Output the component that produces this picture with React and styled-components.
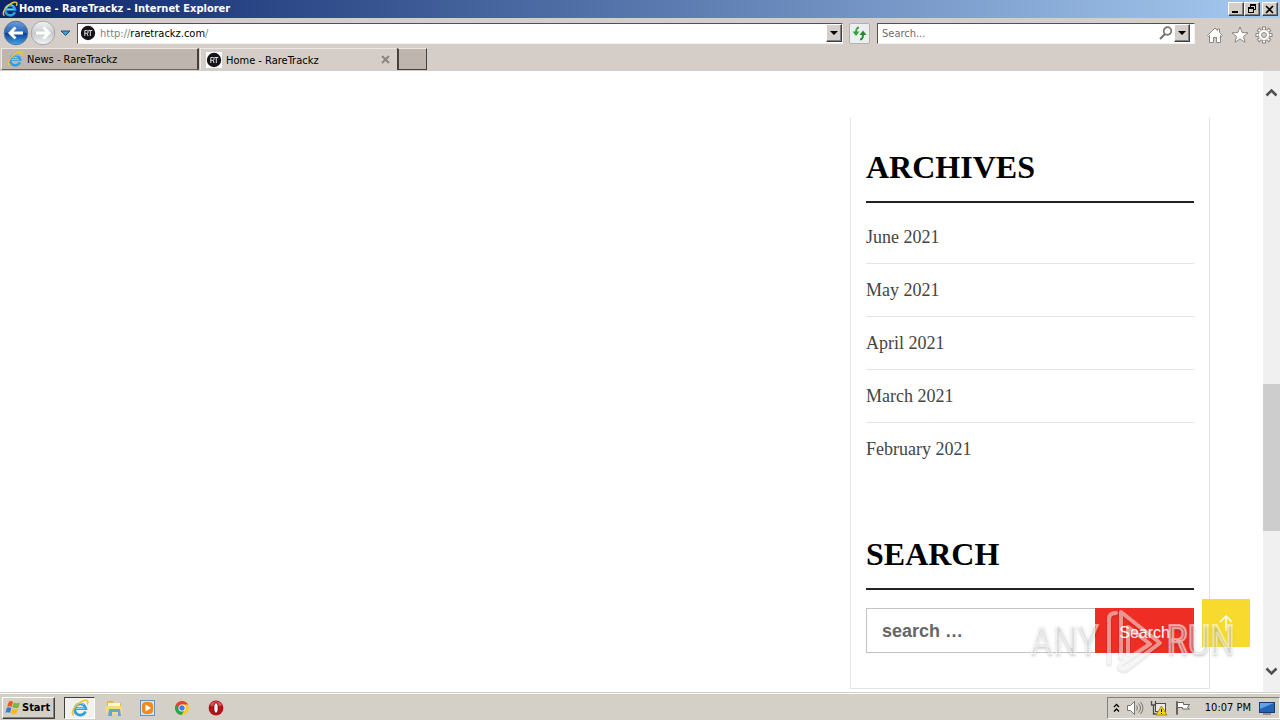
import React, { useState } from 'react'
import styled, { createGlobalStyle, css } from 'styled-components'

const GlobalStyle = createGlobalStyle`
  * {
    box-sizing: border-box;
  }
  body {
    margin: 0;
    background: #fff;
  }
  button, input {
    font: inherit;
    margin: 0;
    padding: 0;
    border: 0;
    border-radius: 0;
    outline: 0;
  }
  svg {
    display: block;
    flex: none;
  }
`

const raised = css`
  border: 1px solid;
  border-color: #fff #404040 #404040 #fff;
  box-shadow: inset -1px -1px 0 #808080;
`

const Screen = styled.div`
  display: flex;
  flex-direction: column;
  min-height: 100vh;
  font-family: 'DejaVu Sans Condensed', Tahoma, sans-serif;
  font-size: 11px;
  line-height: 14px;
  color: #000;
`

const TitleBar = styled.header`
  display: flex;
  align-items: center;
  height: 18px;
  padding: 0 2px;
  background: linear-gradient(to right, #0a246a, #a6caf0);
  color: #fff;
`

const WindowTitle = styled.h1`
  flex: 1;
  margin: 0 0 0 1px;
  font-size: 11px;
  line-height: 14px;
  font-weight: bold;
  white-space: nowrap;
`

const CaptionButton = styled.button`
  ${raised}
  display: flex;
  align-items: center;
  justify-content: center;
  width: 16px;
  height: 14px;
  margin-left: ${(p) => (p.$gap ? '2px' : '0')};
  background: #d4d0c8;
`

const NavBar = styled.div`
  display: flex;
  align-items: center;
  height: 30px;
  padding: 0 4px 0 2px;
  background: #d5cec8;
`

const IconButton = styled.button`
  display: flex;
  align-items: center;
  justify-content: center;
  width: ${(p) => p.$width || 24}px;
  height: 26px;
  background: transparent;
`

const Field = styled.div`
  display: flex;
  align-items: center;
  flex: ${(p) => (p.$width ? 'none' : '1')};
  width: ${(p) => (p.$width ? p.$width + 'px' : 'auto')};
  height: 21px;
  margin-left: ${(p) => (p.$width ? '7px' : '3px')};
  padding: 0 ${(p) => (p.$width ? '4px' : '0')} 0 2px;
  border: 1px solid;
  border-color: #565049 #f4f1ee #f4f1ee #565049;
  background: #fff;
`

const AddressText = styled.label`
  display: flex;
  flex: 1;
  margin-left: 4px;
  padding-top: 2px;
  color: #808080;
`

const AddressInput = styled.input`
  field-sizing: content;
  color: #000;
  background: transparent;
`

const SearchInput = styled.input`
  flex: 1;
  min-width: 0;
  padding: 2px 0 0 2px;
  background: transparent;
  &::placeholder {
    color: #6d6d6d;
    opacity: 1;
  }
`

const DropButton = styled.button`
  ${raised}
  display: flex;
  align-items: center;
  justify-content: center;
  width: 16px;
  height: 18px;
  background: #d4cfca;
`

const RefreshButton = styled.button`
  display: flex;
  align-items: center;
  justify-content: center;
  width: 21px;
  height: 21px;
  margin-left: 6px;
  border: 1px solid #b5b0aa;
  border-radius: 2px;
  background: #eceff0;
`

const Tools = styled.div`
  display: flex;
  margin-left: 8px;
  padding-top: 3px;
`

const TabRow = styled.nav`
  display: flex;
  gap: 1px;
  height: 23px;
  padding: 0 1px 1px;
  background: #d5cec8;
`

const Tab = styled.div`
  display: flex;
  align-items: center;
  width: ${(p) => (p.$active ? '196px' : '198px')};
  padding: 0 4px 0 5px;
  border: solid;
  border-width: ${(p) => (p.$active ? '1px 0 0 1px' : '1px 2px 1px 1px')};
  border-color: #ece8e4 #45403c #6b6561 #ece8e4;
  background: ${(p) => (p.$active ? '#d5cec8' : '#bdb5ae')};
`

const TabLabel = styled.button`
  flex: 1;
  margin-left: 4px;
  padding-top: 2px;
  background: transparent;
  color: #000;
  text-align: left;
`

const TabClose = styled.button`
  display: flex;
  padding: 2px;
  background: transparent;
`

const NewTab = styled.button`
  width: 30px;
  border: solid;
  border-width: 1px 1px 1px 2px;
  border-color: #ece8e4 #45403c #45403c #45403c;
  background: #bdb5ae;
`

const Viewport = styled.div`
  display: flex;
  flex: 1;
  background: #fff;
`

const Page = styled.main`
  position: relative;
  display: flex;
  justify-content: flex-end;
  align-items: flex-start;
  flex: 1;
  padding: 47px 53px 3px 20px;
`

const Sidebar = styled.aside`
  width: 360px;
  padding: 30px 15px 35px;
  border: 1px solid #e3e3e3;
  border-top: 0;
  font-family: 'Liberation Serif', 'Times New Roman', serif;
`

const Widget = styled.section`
  & + & {
    margin-top: 59px;
  }
`

const WidgetTitle = styled.h2`
  margin: 0;
  padding-bottom: 15px;
  border-bottom: 2px solid #222;
  font-size: 32px;
  line-height: 38px;
  font-weight: bold;
  text-transform: uppercase;
`

const ArchiveList = styled.ul`
  margin: 8px 0 0;
  padding: 0;
  list-style: none;
`

const ArchiveItem = styled.li`
  height: 53px;
  border-bottom: 1px solid #e4e4e4;
  font-size: 18px;
  line-height: 52px;
  &:last-child {
    border-bottom: 0;
  }
`

const ArchiveLink = styled.a`
  color: #444;
  text-decoration: none;
`

const SearchForm = styled.form`
  display: flex;
  height: 45px;
  margin-top: 18px;
  font-family: 'Liberation Sans', Arial, sans-serif;
`

const SiteSearchInput = styled.input`
  flex: 1;
  min-width: 0;
  padding: 2px 15px 0;
  border: 1px solid #c2c2c2;
  border-right: 0;
  font-size: 18px;
  font-weight: bold;
  &::placeholder {
    color: #666;
    opacity: 1;
  }
`

const SubmitButton = styled.button`
  padding: 4px 24px 0;
  background: #ee2d24;
  color: #fff;
  font-size: 16px;
`

const ScrollTop = styled.button`
  position: absolute;
  right: 13px;
  bottom: 45px;
  display: flex;
  align-items: center;
  justify-content: center;
  width: 48px;
  height: 48px;
  background: #f8da2e;
`

const Watermark = styled.div`
  position: absolute;
  right: 28px;
  bottom: 18px;
  display: flex;
  align-items: center;
  gap: 3px;
  pointer-events: none;
  font-family: 'Liberation Sans Narrow', 'Roboto Condensed', 'Liberation Sans', sans-serif;
  font-size: 40px;
  line-height: 48px;
  color: rgba(255, 255, 255, 0.3);
  -webkit-text-stroke: 2px rgba(255, 255, 255, 0.5);
  text-shadow: 0 2px 3px rgba(0, 0, 0, 0.26);
`

const ScrollBar = styled.div`
  display: flex;
  flex-direction: column;
  width: 17px;
  background: #f0f0f0;
`

const ScrollButton = styled.button`
  display: flex;
  align-items: center;
  justify-content: center;
  height: 42px;
  background: transparent;
`

const Track = styled.div`
  flex: ${(p) => p.$part};
  background: ${(p) => (p.$thumb ? '#cdcdcd' : 'transparent')};
`

const TaskBar = styled.footer`
  display: flex;
  align-items: center;
  height: 28px;
  padding: 2px 0 0 2px;
  border-top: 1px solid #d4d0c8;
  box-shadow: inset 0 1px 0 #fff;
  background: #d4d0c8;
`

const StartButton = styled.button`
  ${raised}
  display: flex;
  align-items: center;
  height: 22px;
  margin-right: 9px;
  padding: 0 4px 0 1px;
  background: #d4d0c8;
  font-weight: bold;
`

const TaskButton = styled.button`
  display: flex;
  align-items: center;
  justify-content: center;
  width: ${(p) => (p.$active ? '31px' : '34px')};
  height: 22px;
  margin-right: ${(p) => (p.$active ? '2px' : '0')};
  border: ${(p) => (p.$active ? '1px solid' : '0')};
  border-color: #404040 #fff #fff #404040;
  background: ${(p) => (p.$active ? '#f3f1ee' : 'transparent')};
`

const Tray = styled.div`
  display: flex;
  align-items: center;
  gap: 6px;
  height: 22px;
  margin-left: auto;
  padding: 0 4px 0 5px;
  border: 1px solid;
  border-color: #808080 #fff #fff #808080;
`

const Clock = styled.time`
  margin: 0 2px 0 8px;
  white-space: nowrap;
`

const IeLogo = ({ size = 16 }) => (
  <svg width={size} height={size} viewBox='0 0 16 16' fill='none'>
    <path
      d='M12.9 11.2A5 5 0 1 1 13.2 8.6H4.5'
      stroke='#2f9fe0'
      strokeWidth='2.5'
    />
    <path
      d='M4.5 8.4h7.5M4 6.5a4.6 4.6 0 0 1 7.4-1.5'
      stroke='#8bd3f7'
      strokeWidth='0.9'
    />
    <path
      d='M2.4 14.6C-.6 12.6 3 6.6 7.2 3.7 10.8 1 14.9.2 15 2.6c0 .8-.3 1.5-.7 2.2'
      stroke='#f2c533'
      strokeWidth='1.4'
    />
  </svg>
)

const SiteIcon = () => (
  <svg width='16' height='16' viewBox='0 0 16 16'>
    <rect width='16' height='16' fill='#fff' />
    <circle cx='8' cy='8' r='7.2' fill='#17131a' />
    <path
      d='M4.8 11V5.500h2a1.300 1.300 0 0 1 0 2.800h-2M7 8.300 8.100 11M8.300 5.500h4M10.300 5.500V11'
      stroke='#ddd'
      fill='none'
    />
  </svg>
)

const NavCircle = ({ forward }) => (
  <svg width='26' height='26' viewBox='0 0 26 26'>
    <defs>
      <linearGradient id='backFill' x1='0' y1='0' x2='0' y2='1'>
        <stop offset='0' stopColor='#6c9fdc' />
        <stop offset='0.48' stopColor='#2a62b4' />
        <stop offset='0.52' stopColor='#0d3f95' />
        <stop offset='1' stopColor='#3fa9ee' />
      </linearGradient>
      <linearGradient id='forwardFill' x1='0' y1='0' x2='0' y2='1'>
        <stop offset='0' stopColor='#f5f5f5' />
        <stop offset='0.5' stopColor='#c6c9ce' />
        <stop offset='1' stopColor='#f2f4f6' />
      </linearGradient>
    </defs>
    <circle
      cx='13'
      cy='13'
      r='11.8'
      fill={forward ? 'url(#forwardFill)' : 'url(#backFill)'}
      stroke={forward ? '#a3a6ab' : '#5b7396'}
    />
    <path
      d={forward ? 'M6 13h12M13.5 7.5 19 13l-5.5 5.5' : 'M20 13H8M12.5 7.5 7 13l5.5 5.5'}
      stroke='#fff'
      strokeWidth='2.8'
      fill='none'
    />
  </svg>
)

const Caret = () => (
  <svg width='9' height='6' viewBox='0 0 9 6'>
    <path d='M0 1h8L4 5z' />
  </svg>
)

const Chevron = ({ down }) => (
  <svg width='13' height='9' viewBox='0 0 13 9' fill='none'>
    <path
      d={down ? 'M1.5 1.5l5 5 5-5' : 'M1.5 7.5l5-5 5 5'}
      stroke='#505050'
      strokeWidth='2.6'
    />
  </svg>
)

const gearTeeth = [0, 45, 90, 135, 180, 225, 270, 315]

const GearIcon = () => (
  <svg width='18' height='18' viewBox='0 0 18 18'>
    {gearTeeth.map((a) => (
      <rect
        key={a}
        x='7.5'
        y='1'
        width='3'
        height='4'
        fill='#fff'
        stroke='#8b8681'
        transform={`rotate(${a} 9 9)`}
      />
    ))}
    <circle cx='9' cy='9' r='5.5' fill='#fff' stroke='#8b8681' strokeWidth='0.6' />
    <circle cx='9' cy='9' r='2.4' fill='#d5cec8' stroke='#8b8681' />
  </svg>
)

const WindowsFlag = () => (
  <svg width='18' height='18' viewBox='0 0 17 16'>
    <path d='M4.5 2C6 1.200 7.500 1.400 8.600 2.200L7.300 7C6 6.200 4.500 6.200 3 6.900z' fill='#ee5a24' />
    <path d='M9.300 2.600c1.600 1 3.500 1.100 5.700.1l-1.400 4.800c-2 .9-3.900.8-5.600-.2z' fill='#7ab932' />
    <path d='M2.700 7.700c1.500-.8 3-.6 4.300.2l-1.300 4.700c-1.400-.9-2.900-.9-4.400-.1z' fill='#2c80d3' />
    <path d='M7.700 8.400c1.700 1 3.500 1 5.600.1L12 13.100c-2 1-4 .9-5.600-.1z' fill='#f8bd16' />
  </svg>
)

const FolderIcon = () => (
  <svg width='18' height='18' viewBox='0 0 18 18'>
    <path d='M2 2h6l1 2h7v10H2z' fill='#dfb84a' />
    <path d='M3 4h12v4H3z' fill='#fff6cf' />
    <path d='M1 7h16v8H1z' fill='#f5dc80' />
    <path d='M4 10h11l1 7h-3v-4H7v4H3z' fill='#5aa9da' />
  </svg>
)

const PlayerIcon = () => (
  <svg width='18' height='18' viewBox='0 0 18 18'>
    <rect x='1.5' y='1.5' width='14' height='15' fill='#cfe6fa' stroke='#5a97d1' />
    <rect x='3' y='3' width='11' height='12' rx='4' fill='#f18a1b' />
    <path d='M6.5 5.500 12 9l-5.500 3.500z' fill='#fff' />
  </svg>
)

const ChromeIcon = () => (
  <svg width='16' height='16' viewBox='0 0 16 16'>
    <circle cx='8' cy='8' r='7' fill='#f7c92c' />
    <path d='M1.900 4.500A7 7 0 0 0 7.500 15L11 9.500 8 8z' fill='#2ba24c' />
    <path d='M8 4.500h6.100A7 7 0 0 0 1.900 4.500L5 9.500z' fill='#df4332' />
    <circle cx='8' cy='8' r='3.500' fill='#fff' />
    <circle cx='8' cy='8' r='2.700' fill='#3d7fe0' />
  </svg>
)

const OperaIcon = () => (
  <svg width='16' height='16' viewBox='0 0 16 16'>
    <circle cx='8' cy='8' r='7.4' fill='#b5121b' />
    <path d='M2 5a7 7 0 0 1 12 0c-3 2-9 2-12 0z' fill='#d9555a' />
    <ellipse cx='8' cy='8' rx='2.2' ry='5.2' fill='#fff' stroke='#7c0a10' />
  </svg>
)

const archives = [
  'June 2021',
  'May 2021',
  'April 2021',
  'March 2021',
  'February 2021'
]

const tasks = [
  { name: 'Windows Explorer', icon: <FolderIcon /> },
  { name: 'Media Player', icon: <PlayerIcon /> },
  { name: 'Chrome', icon: <ChromeIcon /> },
  { name: 'Opera', icon: <OperaIcon /> }
]

const BrowserChrome = () => {
  const [address, setAddress] = useState('raretrackz.com')
  const [query, setQuery] = useState('')

  return (
    <>
      <TitleBar>
        <IeLogo />
        <WindowTitle>Home - RareTrackz - Internet Explorer</WindowTitle>
        <CaptionButton type='button' aria-label='Minimize'>
          <svg width='10' height='9' viewBox='0 0 10 9'>
            <path d='M1 6h6v2H1z' />
          </svg>
        </CaptionButton>
        <CaptionButton type='button' aria-label='Restore'>
          <svg width='10' height='10' viewBox='0 0 10 10'>
            <path d='M3 0h6v6H7V5h1V2H4v1H3zM1 3h6v6H1zM2 5v3h4V5z' fillRule='evenodd' />
          </svg>
        </CaptionButton>
        <CaptionButton type='button' aria-label='Close' $gap>
          <svg width='10' height='9' viewBox='0 0 10 9'>
            <path d='M1 1l7 7M8 1 1 8' stroke='#000' strokeWidth='1.7' />
          </svg>
        </CaptionButton>
      </TitleBar>
      <NavBar>
        <IconButton type='button' aria-label='Back' $width={27}>
          <NavCircle />
        </IconButton>
        <IconButton type='button' aria-label='Forward' $width={28}>
          <NavCircle forward />
        </IconButton>
        <IconButton type='button' aria-label='Recent pages' $width={17}>
          <svg width='11' height='7' viewBox='0 0 11 7'>
            <path d='M1 1h9L5.500 5.500z' fill='#4b9ad0' stroke='#1d4f85' />
          </svg>
        </IconButton>
        <Field>
          <SiteIcon />
          <AddressText>
            http://
            <AddressInput
              aria-label='Address'
              value={address}
              onChange={(e) => setAddress(e.target.value)}
            />
            /
          </AddressText>
          <DropButton type='button' aria-label='Show address list'>
            <Caret />
          </DropButton>
        </Field>
        <RefreshButton type='button' aria-label='Refresh'>
          <svg width='17' height='15' viewBox='0 0 17 15' fill='none'>
            <path d='M8 1.500C5.500 1.500 5 3 5 7' stroke='#36a03a' strokeWidth='2' />
            <path d='M1.500 5.500h7L5 10z' fill='#36a03a' />
            <path d='M9 13.500c2.500 0 3-1.500 3-5.500' stroke='#218b2b' strokeWidth='2' />
            <path d='M8.500 9h7L12 4.500z' fill='#218b2b' />
          </svg>
        </RefreshButton>
        <Field $width={318}>
          <SearchInput
            aria-label='Search the web'
            placeholder='Search...'
            value={query}
            onChange={(e) => setQuery(e.target.value)}
          />
          <IconButton type='button' aria-label='Search' $width={17}>
            <svg width='14' height='14' viewBox='0 0 14 14' fill='none' stroke='#77726e'>
              <circle cx='8.5' cy='5' r='3.8' strokeWidth='1.7' />
              <path d='M6 8 1 13' strokeWidth='2.2' />
            </svg>
          </IconButton>
          <DropButton type='button' aria-label='Search options'>
            <Caret />
          </DropButton>
        </Field>
        <Tools>
          <IconButton type='button' aria-label='Home'>
            <svg width='18' height='18' viewBox='0 0 18 18' fill='#fff' stroke='#8b8681'>
              <path d='M1.500 9.500 9 2l2.500 2.500V3h2v3.500l3 3-1 1-1-1v7h-4v-5h-3v5h-4v-7l-1 1z' />
            </svg>
          </IconButton>
          <IconButton type='button' aria-label='Favorites' $width={25}>
            <svg width='18' height='18' viewBox='0 0 18 18' fill='#fff' stroke='#8b8681'>
              <path d='M9 1l2.200 5.500 5.800.3-4.500 3.700 1.500 5.800L9 13l-5 3.300 1.500-5.800L1 6.800l5.800-.3z' />
            </svg>
          </IconButton>
          <IconButton type='button' aria-label='Tools'>
            <GearIcon />
          </IconButton>
        </Tools>
      </NavBar>
      <TabRow aria-label='Tabs'>
        <Tab>
          <IeLogo />
          <TabLabel type='button'>News - RareTrackz</TabLabel>
        </Tab>
        <Tab $active>
          <SiteIcon />
          <TabLabel type='button'>Home - RareTrackz</TabLabel>
          <TabClose type='button' aria-label='Close tab'>
            <svg width='9' height='9' viewBox='0 0 9 9'>
              <path d='M1 1l7 7M8 1 1 8' stroke='#8a8580' strokeWidth='2' />
            </svg>
          </TabClose>
        </Tab>
        <NewTab type='button' aria-label='New tab' />
      </TabRow>
    </>
  )
}

const SitePage = () => {
  const [term, setTerm] = useState('')

  return (
    <Page>
      <Sidebar>
        <Widget>
          <WidgetTitle>Archives</WidgetTitle>
          <ArchiveList>
            {archives.map((month) => (
              <ArchiveItem key={month}>
                <ArchiveLink href='#'>{month}</ArchiveLink>
              </ArchiveItem>
            ))}
          </ArchiveList>
        </Widget>
        <Widget>
          <WidgetTitle>Search</WidgetTitle>
          <SearchForm onSubmit={(e) => e.preventDefault()}>
            <SiteSearchInput
              aria-label='Search for'
              placeholder='search …'
              value={term}
              onChange={(e) => setTerm(e.target.value)}
            />
            <SubmitButton type='submit'>Search</SubmitButton>
          </SearchForm>
        </Widget>
      </Sidebar>
      <ScrollTop type='button' aria-label='Back to top'>
        <svg width='16' height='18' viewBox='0 0 16 18' fill='none' stroke='#fff'>
          <path d='M8 17V2M2 8l6-6 6 6' strokeWidth='1.5' />
        </svg>
      </ScrollTop>
      <Watermark>
        <span>ANY</span>
        <svg
          width='62'
          height='66'
          viewBox='0 0 62 66'
          fill='none'
          strokeLinejoin='round'
          strokeLinecap='round'
        >
          <g stroke='#000' strokeOpacity='0.07' strokeWidth='6'>
            <path d='M14 6q-7 0-7 6v44M19 51V5l39 31-35 27q-7 0-5-5l30-21-22-17v28' />
          </g>
          <g stroke='#fff' strokeOpacity='0.5' strokeWidth='4'>
            <path d='M14 5q-7 0-7 6v43M19 49V4l39 31-35 26q-7 0-5-5l30-20-22-17v28' />
          </g>
        </svg>
        <span>RUN</span>
      </Watermark>
    </Page>
  )
}

const Desktop = () => (
  <TaskBar>
    <StartButton type='button'>
      <WindowsFlag />
      Start
    </StartButton>
    <TaskButton type='button' aria-label='Internet Explorer' $active>
      <IeLogo size={18} />
    </TaskButton>
    {tasks.map((task) => (
      <TaskButton key={task.name} type='button' aria-label={task.name}>
        {task.icon}
      </TaskButton>
    ))}
    <Tray>
      <svg width='7' height='10' viewBox='0 0 7 10' fill='none' stroke='#000'>
        <path d='M1 4l2.500-2.500L6 4M1 8.500 3.500 6 6 8.500' strokeWidth='1.3' />
      </svg>
      <svg width='18' height='16' viewBox='0 0 18 16' fill='none' stroke='#77736e'>
        <path d='M1.500 5.500h3l4-4v13l-4-4h-3z' fill='#fff' />
        <path d='M10.500 5.500q2 2.500 0 5M12.500 3.500q4 4.500 0 9M14.500 2q5 6 0 12' />
      </svg>
      <svg width='18' height='16' viewBox='0 0 18 16'>
        <rect x='5.500' y='3.500' width='10' height='8' fill='#e9e9e9' stroke='#4c4c4c' />
        <path d='M1.500 1v4h4V1M3.500 5v9h4' fill='none' stroke='#4c4c4c' strokeWidth='1.3' />
        <path d='M11.500 6 17 15H6z' fill='#f7d21e' stroke='#ad8b10' />
        <path d='M11.500 9v3M11.500 13v1' stroke='#000' />
      </svg>
      <svg width='17' height='16' viewBox='0 0 17 16' fill='#fff' stroke='#66625d'>
        <path d='M2.500 1.500h1v13h-1z' />
        <path d='M3.500 2.500h6v2h6l-2 3 2 1.500h-7V7.500h-5z' />
      </svg>
      <Clock>10:07 PM</Clock>
      <svg width='16' height='14' viewBox='0 0 16 14'>
        <rect x='0.5' y='1.5' width='15' height='10' fill='#2363b5' stroke='#123d78' />
        <path d='M1 2h14L1 8z' fill='#5fa4e6' />
        <path d='M4 13h8' stroke='#555' />
      </svg>
    </Tray>
  </TaskBar>
)

const App = () => (
  <Screen>
    <GlobalStyle />
    <BrowserChrome />
    <Viewport>
      <SitePage />
      <ScrollBar>
        <ScrollButton type='button' aria-label='Scroll up'>
          <Chevron />
        </ScrollButton>
        <Track $part={270} />
        <Track $part={147} $thumb />
        <Track $part={119} />
        <ScrollButton type='button' aria-label='Scroll down'>
          <Chevron down />
        </ScrollButton>
      </ScrollBar>
    </Viewport>
    <Desktop />
  </Screen>
)

export default App
